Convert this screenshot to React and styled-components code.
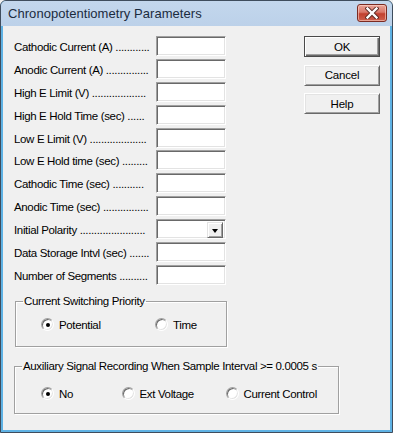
import React from 'react';
import styled, { createGlobalStyle, css } from 'styled-components';

const GlobalStyle = createGlobalStyle`
  html, body { margin: 0; padding: 0; background: #f0f0f0; }
  body { font-family: "Liberation Sans", Arial, sans-serif; overflow: hidden; }
  * { box-sizing: border-box; }
`;

const FONT = `11.5px "Liberation Sans", Arial, sans-serif`;

const Window = styled.div`
  width: 393px;
  height: 433px;
  display: flex;
  flex-direction: column;
  border: 1px solid #3f4d5d;
  border-radius: 6px 6px 0 0;
  background: #5fb2e4;
  overflow: hidden;
`;

const TitleBar = styled.div`
  height: 25px;
  flex: none;
  display: flex;
  align-items: flex-start;
  justify-content: space-between;
  background: linear-gradient(#c3d7ed, #bcd1e9);
  padding: 0 5px 0 7px;
`;

const Title = styled.div`
  font: 13px "Liberation Sans", Arial, sans-serif;
  color: #1b2b3e;
  line-height: 25px;
  letter-spacing: 0.05px;
`;

const CloseBtn = styled.div`
  margin-top: 3px;
  width: 30px;
  height: 18px;
  border: 1px solid #7b2b22;
  border-radius: 3px;
  background: linear-gradient(#eaa498 0%, #d9776a 45%, #c2402f 55%, #cd5f4d 100%);
  box-shadow: inset 0 0 0 1px rgba(255, 220, 210, 0.55);
  display: flex;
  align-items: center;
  justify-content: center;
`;

const Frame = styled.div`
  flex: 1;
  display: flex;
  padding: 0 2px 2px 2px;
`;

const Client = styled.div`
  flex: 1;
  background: #f0f0f0;
  padding: 10px 0 0 11px;
  display: flex;
  flex-direction: column;
  font: ${FONT};
  color: #000;
`;

const TopRow = styled.div`
  display: flex;
  align-items: flex-start;
`;

const Form = styled.div`
  display: grid;
  grid-template-columns: 142px 70px;
  grid-auto-rows: 20px;
  row-gap: 2.9px;
`;

const Label = styled.div`
  display: flex;
  align-items: center;
  padding-top: 2px;
  white-space: nowrap;
  letter-spacing: -0.35px;
`;

const Field = styled.div`
  position: relative;
  height: 20px;
  background: #fff;
  border: 1px solid;
  border-color: #a0a0a0 #fff #fff #a0a0a0;
  box-shadow: inset 1px 1px 0 #696969, inset -1px -1px 0 #e3e3e3;
  display: flex;
  justify-content: flex-end;
  padding: 2px;
`;

const DropButton = styled.div`
  width: 16px;
  height: 16px;
  background: #f0f0f0;
  border: 1px solid;
  border-color: #e3e3e3 #696969 #696969 #e3e3e3;
  box-shadow: inset 1px 1px 0 #fff, inset -1px -1px 0 #a0a0a0;
  display: flex;
  align-items: center;
  justify-content: center;
`;

const Arrow = styled.div`
  width: 0;
  height: 0;
  border-left: 3.5px solid transparent;
  border-right: 3.5px solid transparent;
  border-top: 4px solid #000;
  margin-top: 1px;
`;

const Buttons = styled.div`
  margin-left: 78px;
  display: flex;
  flex-direction: column;
  gap: 7.5px;
`;

const Btn = styled.button`
  width: 76px;
  height: 21px;
  padding: 0;
  background: #f0f0f0;
  font: ${FONT};
  color: #000;
  letter-spacing: -0.2px;
  border: 1px solid;
  border-color: #fff #696969 #696969 #fff;
  box-shadow: inset 1px 1px 0 #e3e3e3, inset -1px -1px 0 #a0a0a0;
  ${(p) =>
    p.$default &&
    css`
      border-color: #4a4a4a;
      box-shadow: inset 1px 1px 0 #fff, inset -1px -1px 0 #696969, inset -2px -2px 0 #a0a0a0;
    `}
`;

const Group = styled.fieldset`
  margin: ${(p) => p.$top}px 0 0 ${(p) => p.$left}px;
  width: ${(p) => p.$width}px;
  height: ${(p) => p.$height}px;
  padding: 0;
  border: 1px solid #a0a0a0;
  box-shadow: 1px 1px 0 #fff, inset 1px 1px 0 #fff;
  min-width: 0;
`;

const Legend = styled.legend`
  margin-left: 7px;
  padding: 0 1px;
  font: ${FONT};
  line-height: 13px;
  letter-spacing: -0.35px;
`;

const RadioRow = styled.div`
  display: flex;
  padding: ${(p) => p.$top}px 0 0 ${(p) => p.$left}px;
`;

const RadioOption = styled.div`
  width: ${(p) => p.$width}px;
  display: flex;
  align-items: center;
  gap: 5px;
  white-space: nowrap;
  letter-spacing: -0.35px;
  line-height: 13px;
`;

const RadioCircle = styled.span`
  position: relative;
  flex: none;
  width: 13px;
  height: 13px;
  border-radius: 50%;
  background: #fff;
  border: 1px solid;
  border-color: #a0a0a0 #fff #fff #a0a0a0;
  box-shadow: inset 1px 1px 0 #696969, inset -1px -1px 0 #e3e3e3;
  ${(p) =>
    p.$checked &&
    css`
      &::after {
        content: '';
        position: absolute;
        left: 3.5px;
        top: 3.5px;
        width: 4px;
        height: 4px;
        border-radius: 50%;
        background: #000;
      }
    `}
`;

const RadioText = styled.span`
  padding-top: 1px;
`;

const rows = [
  ['Cathodic Current (A)', 12],
  ['Anodic Current (A)', 15],
  ['High E Limit (V)', 19],
  ['High E Hold Time (sec)', 6],
  ['Low E Limit (V)', 20],
  ['Low E Hold time (sec)', 9],
  ['Cathodic Time (sec)', 11],
  ['Anodic Time (sec)', 16],
  ['Initial Polarity', 23, true],
  ['Data Storage Intvl (sec)', 7],
  ['Number of Segments', 10],
];

function Radio({ checked, width, children }) {
  return (
    <RadioOption $width={width}>
      <RadioCircle $checked={checked} />
      <RadioText>{children}</RadioText>
    </RadioOption>
  );
}

export default function App() {
  return (
    <>
      <GlobalStyle />
      <Window>
        <TitleBar>
          <Title>Chronopotentiometry Parameters</Title>
          <CloseBtn>
            <svg width="14" height="12" viewBox="0 0 14 12">
              <path d="M2.5 1.5 L11.5 10.5 M11.5 1.5 L2.5 10.5" stroke="#5a2a24" strokeWidth="4.2" strokeLinecap="square" />
              <path d="M2.5 1.5 L11.5 10.5 M11.5 1.5 L2.5 10.5" stroke="#fff" strokeWidth="2.4" strokeLinecap="square" />
            </svg>
          </CloseBtn>
        </TitleBar>
        <Frame>
          <Client>
            <TopRow>
              <Form>
                {rows.map(([label, dots, combo]) => (
                  <React.Fragment key={label}>
                    <Label>{label + ' ' + '.'.repeat(dots)}</Label>
                    <Field>
                      {combo && (
                        <DropButton>
                          <Arrow />
                        </DropButton>
                      )}
                    </Field>
                  </React.Fragment>
                ))}
              </Form>
              <Buttons>
                <Btn $default>OK</Btn>
                <Btn>Cancel</Btn>
                <Btn>Help</Btn>
              </Buttons>
            </TopRow>
            <Group $top={10} $left={1} $width={212} $height={52}>
              <Legend>Current Switching Priority</Legend>
              <RadioRow $top={10} $left={25}>
                <Radio checked width={114}>Potential</Radio>
                <Radio width={60}>Time</Radio>
              </RadioRow>
            </Group>
            <Group $top={13} $left={0} $width={325} $height={54}>
              <Legend>Auxiliary Signal Recording When Sample Interval &gt;= 0.0005 s</Legend>
              <RadioRow $top={14} $left={26}>
                <Radio checked width={80.5}>No</Radio>
                <Radio width={104}>Ext Voltage</Radio>
                <Radio width={110}>Current Control</Radio>
              </RadioRow>
            </Group>
          </Client>
        </Frame>
      </Window>
    </>
  );
}
